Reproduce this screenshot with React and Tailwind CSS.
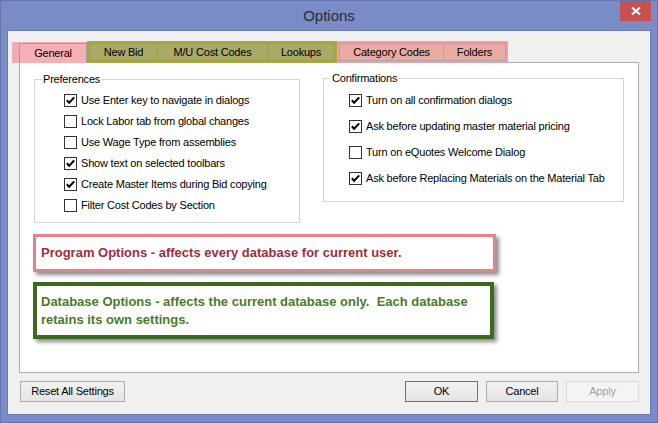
import React from "react";

const UI = "font-['Liberation_Sans',Arial,sans-serif]";

function Check({ checked }) {
  return (
    <span className="w-[13px] h-[13px] border border-[#333333] bg-white flex items-center justify-center shrink-0">
      {checked && (
        <svg width="11" height="11" viewBox="0 0 11 11">
          <path d="M1.8 5.2 L4.2 7.8 L9.2 2.4" fill="none" stroke="#000" strokeWidth="2" />
        </svg>
      )}
    </span>
  );
}

function Row({ checked, label, h, pl }) {
  return (
    <div className={`flex items-center gap-[4px] ${h} ${pl}`}>
      <Check checked={checked} />
      <span className="leading-[13px] whitespace-nowrap">{label}</span>
    </div>
  );
}

function Btn({ children, w, variant }) {
  const base = "h-[21px] flex items-center justify-center border bg-linear-to-b";
  const v =
    variant === "default"
      ? "border-[#3c7fb1] from-[#f2f2f2] to-[#e4e4e4] text-black"
      : variant === "disabled"
      ? "border-[#d9d9d9] from-[#f4f4f4] to-[#f4f4f4] text-[#a0a0a0]"
      : "border-[#acacac] from-[#f2f2f2] to-[#e4e4e4] text-black";
  return <div className={`${base} ${v} ${w}`}>{children}</div>;
}

export default function App() {
  const prefs = [
    [true, "Use Enter key to navigate in dialogs"],
    [false, "Lock Labor tab from global changes"],
    [false, "Use Wage Type from assemblies"],
    [true, "Show text on selected toolbars"],
    [true, "Create Master Items during Bid copying"],
    [false, "Filter Cost Codes by Section"],
  ];
  const confs = [
    [true, "Turn on all confirmation dialogs"],
    [true, "Ask before updating master material pricing"],
    [false, "Turn on eQuotes Welcome Dialog"],
    [true, "Ask before Replacing Materials on the Material Tab"],
  ];

  return (
    <div className={`w-[658px] h-[423px] bg-[#7a8cc5] border border-[#6676b0] flex flex-col ${UI} text-[11px] tracking-[-0.2px] text-black overflow-hidden`}>
      {/* Title bar */}
      <div className="h-[29px] grid grid-cols-[1fr_auto_1fr] items-start shrink-0">
        <div />
        <div className="text-[15px] tracking-normal text-[#2b2b33] leading-[30px]">Options</div>
        <div className="flex justify-end pr-[6px]">
          <div className="w-[31px] h-[20px] bg-[#c75050] flex items-center justify-center">
            <svg width="10" height="8" viewBox="0 0 10 8">
              <path d="M1 0.5 L9 7.5 M9 0.5 L1 7.5" stroke="#fff" strokeWidth="2" />
            </svg>
          </div>
        </div>
      </div>

      {/* Client */}
      <div className="ml-[6px] w-[644px] h-[385px] border border-[#6b7bb3] bg-[#f0f0f0] flex flex-col shrink-0">
        {/* Tabs */}
        <div className="relative z-10 mt-[10px] ml-[4px] h-[22px] flex items-end">
          <div className="h-[21px] pl-[7px] pt-[1px] bg-[#f3abb5]">
            <div className="w-[68px] h-[20px] border-t border-x border-[#a0a0a0] bg-[#f5b0b5] flex items-center justify-center">
              General
            </div>
          </div>
          <div className="h-[22px] border-2 border-[#aaaa3a] bg-[#a9a968] flex">
            <div className="w-[69px] h-full border border-[#9e9e48] flex items-center justify-center">New Bid</div>
            <div className="w-[111px] -ml-px h-full border border-[#9e9e48] flex items-center justify-center">M/U Cost Codes</div>
            <div className="w-[68px] -ml-px h-full border border-[#9e9e48] flex items-center justify-center">Lookups</div>
          </div>
          <div className="h-[22px] border-2 border-[#f09bb0] bg-[#e8aca2] flex">
            <div className="w-[105px] h-full border border-[#a3ad9f] flex items-center justify-center">Category Codes</div>
            <div className="w-[63px] -ml-px h-full border border-[#a3ad9f] flex items-center justify-center">Folders</div>
          </div>
        </div>

        {/* Panel */}
        <div className="-mt-px ml-[11px] w-[620px] h-[311px] border border-[#adadad] bg-white flex flex-col shrink-0">
          <div className="flex items-start pl-[14px]">
            <fieldset className="mt-[9px] w-[266px] border border-[#d5d5d5] pt-[4px] pb-[6px]">
              <legend className="ml-[7px] px-[1px] leading-[14px]">Preferences</legend>
              {prefs.map(([c, l]) => (
                <Row key={l} checked={c} label={l} h="h-[21px]" pl="pl-[29px]" />
              ))}
            </fieldset>
            <fieldset className="mt-[8px] ml-[23px] w-[301px] border border-[#d5d5d5] pt-[2px] pb-[10px]">
              <legend className="ml-[6px] px-[2px] leading-[14px]">Confirmations</legend>
              {confs.map(([c, l]) => (
                <Row key={l} checked={c} label={l} h="h-[26px]" pl="pl-[25px]" />
              ))}
            </fieldset>
          </div>

          <div className="mt-[11px] ml-[13px] w-[463px] h-[38px] border-[3px] border-[#ea7f8a] bg-white shadow-[3px_3px_4px_rgba(0,0,0,0.45)] flex items-center pl-[5px]">
            <span className="text-[13px] font-bold tracking-normal text-[#a52a3c] whitespace-nowrap">
              Program Options - affects every database for current user.
            </span>
          </div>

          <div className="mt-[10px] ml-[13px] w-[461px] h-[57px] border-[4px] border-[#3e6a1d] bg-white shadow-[3px_3px_4px_rgba(0,0,0,0.45)] flex items-center pl-[4px]">
            <span className="text-[13px] font-bold tracking-normal text-[#4c7a28] leading-[17.6px] whitespace-pre">
              {"Database Options - affects the current database only.  Each database\nretains its own settings."}
            </span>
          </div>
        </div>

        {/* Buttons */}
        <div className="mt-[8px] pl-[12px] pr-[11px] flex">
          <Btn w="w-[105px]">Reset All Settings</Btn>
          <div className="flex-1" />
          <div className="flex gap-[8px]">
            <Btn w="w-[73px]" variant="default">OK</Btn>
            <Btn w="w-[72px]">Cancel</Btn>
            <Btn w="w-[73px]" variant="disabled">Apply</Btn>
          </div>
        </div>
      </div>
    </div>
  );
}
